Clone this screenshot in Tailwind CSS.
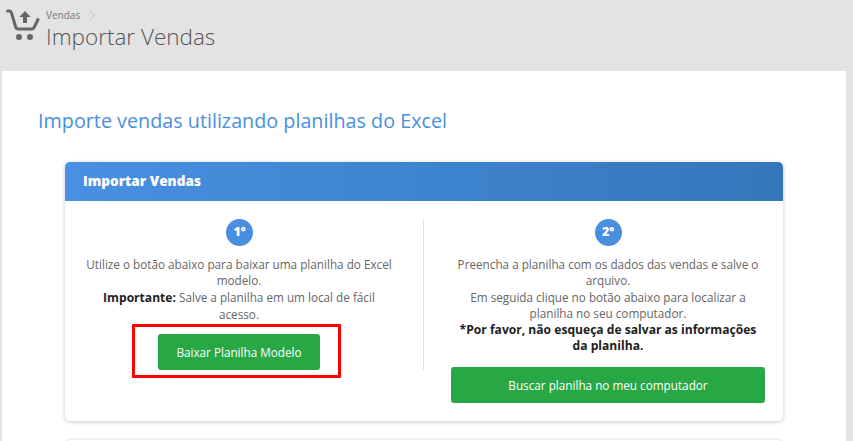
<!DOCTYPE html>
<html lang="pt-BR">
<head>
    <meta charset="UTF-8">
    <title>Importar Vendas</title>
    <script src="https://cdn.jsdelivr.net/npm/@tailwindcss/browser@4"></script>
</head>
<body class="h-[441px] overflow-hidden bg-[#e3e3e3] font-['Open_Sans',sans-serif] text-[#555]">

    <!-- Topo -->
    <header class="flex h-[71px] pl-[6px] pt-[8px]">
        <svg class="mt-[1px] h-[32px] w-[34px] text-[#666]" viewBox="0 0 34 32" fill="none">
            <path d="M1.500 2h1.800c1 0 1.800.6 2.100 1.600L9.600 17.800c.4 1.400 1.300 2.200 2.700 2.200h13.200c1.300 0 2.300-.7 2.800-1.900L32 10.500" stroke="currentColor" stroke-width="3" stroke-linecap="round" stroke-linejoin="round"/>
            <path d="M19 2l5.700 6H21v6h-4V8h-3.700z" fill="currentColor"/>
            <circle cx="13" cy="28" r="3" fill="currentColor"/>
            <circle cx="24" cy="28" r="3" fill="currentColor"/>
        </svg>
        <div class="ml-[6px]">
            <div class="flex h-[15px] items-center text-[10px] leading-[15px] text-[#777]">
                Vendas
                <svg class="ml-[9px] h-[11px] w-[7px] text-[#ccc]" viewBox="0 0 7 11" fill="none"><path d="M1 1l4.500 4.500L1 10" stroke="currentColor" stroke-width="1.300"/></svg>
            </div>
            <h1 class="-mt-[1px] text-[22.500px] leading-[30px] font-light text-[#555]">Importar Vendas</h1>
        </div>
    </header>

    <!-- Conteudo -->
    <main class="ml-[2px] mr-[7px] h-[370px] overflow-hidden bg-white pl-[36px] pt-[36px]">
        <h2 class="text-[19.750px] leading-[28px] text-[#4a8fdf]">Importe vendas utilizando planilhas do Excel</h2>

        <section class="relative mt-[27px] ml-[27px] h-[259px] w-[718px] rounded-[5px] bg-white shadow-[0_1px_4px_rgba(0,0,0,0.22)]">
            <div class="flex h-[39px] items-center rounded-t-[5px] bg-gradient-to-r from-[#4a90e2] to-[#3377bb] pl-[18px] text-[13.600px] font-extrabold text-white">Importar Vendas</div>

            <div class="flex pt-[18px] text-center text-[11.730px] leading-[16.300px] text-[#666]">
                <div class="h-[151px] w-[359px] border-r border-[#e0e0e0] pl-[18px] pr-[28px]">
                    <div class="mb-[10px] ml-[143px] flex h-[27px] w-[27px] items-center justify-center rounded-full bg-[#4a8fdf] text-[12.500px] font-extrabold text-white">1º</div>
                    <p class="ml-[2px] w-[308px]">Utilize o botão abaixo para baixar uma planilha do Excel modelo.<br><b class="text-[12.100px] font-bold text-[#222]">Importante:</b> Salve a planilha em um local de fácil acesso.</p>
                    <button class="mt-[12px] h-[36px] w-[162px] rounded-[3px] bg-[#28a745] text-[11.730px] text-white">Baixar Planilha Modelo</button>
                </div>
                <div class="w-[341px] pl-[27px]">
                    <div class="mx-auto mb-[10px] flex h-[27px] w-[27px] items-center justify-center rounded-full bg-[#4a8fdf] text-[12.500px] font-extrabold text-white">2º</div>
                    <p class="mx-auto w-[302px]">Preencha a planilha com os dados das vendas e salve o arquivo.<br>Em seguida clique no botão abaixo para localizar a planilha no seu computador.<br><b class="text-[12.100px] leading-[15px] font-bold text-[#222]">*Por favor, não esqueça de salvar as informações da planilha.</b></p>
                    <button class="mt-[13px] h-[36px] w-[314px] rounded-[3px] bg-[#28a745] text-[11.730px] text-white">Buscar planilha no meu computador</button>
                </div>
            </div>

            <!-- destaque vermelho -->
            <div class="absolute left-[67px] top-[162px] h-[54px] w-[209px] rounded-[1px] border-[3px] border-[#ff0000]"></div>
        </section>

        <div class="mt-[19px] ml-[27px] h-[20px] w-[718px] rounded-t-[5px] shadow-[0_0_3px_rgba(0,0,0,0.2)]"></div>
    </main>

</body>
</html>
